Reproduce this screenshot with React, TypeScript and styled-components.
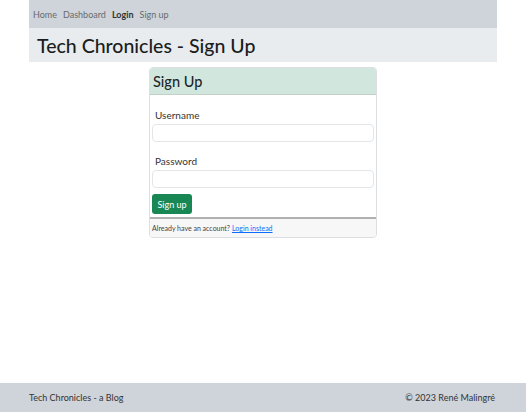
import styled, { createGlobalStyle } from "styled-components";

const GlobalStyle = createGlobalStyle`
  html, body {
    margin: 0;
    padding: 0;
    height: 100%;
  }
  body {
    font-family: Lato, "Noto Sans", sans-serif;
    color: #212529;
    background: #fff;
  }
  #root {
    height: 100%;
  }
`;

const Page = styled.div`
  min-height: 100vh;
  display: flex;
  flex-direction: column;
`;

const Container = styled.div`
  margin: 0 29px;
`;

const NavBar = styled.nav`
  background-color: #ced4da;
  height: 28px;
  display: flex;
  align-items: center;
  gap: 6px;
  padding-left: 4px;
`;

const NavLink = styled.a<{ $active?: boolean }>`
  font-size: 9px;
  color: ${(p) => (p.$active ? "#333" : "#666b70")};
  font-weight: ${(p) => (p.$active ? 700 : 400)};
  text-decoration: none;
`;

const Banner = styled.header`
  background-color: #e9ecef;
  height: 34px;
  display: flex;
  align-items: center;
  padding-left: 8px;
`;

const Title = styled.h1`
  margin: 0;
  font-size: 19.5px;
  font-weight: 500;
  color: #1a1d20;
`;

const Card = styled.div`
  width: 226px;
  margin: 5px auto 0;
  border: 1px solid #dcdfe2;
  border-radius: 4px;
  overflow: hidden;
`;

const CardHeader = styled.div`
  background-color: #d1e7dd;
  height: 26px;
  border-bottom: 1px solid #c3d0ca;
  display: flex;
  align-items: center;
  padding-left: 3px;
`;

const CardTitle = styled.h2`
  margin: 0;
  font-size: 14.5px;
  font-weight: 500;
`;

const CardBody = styled.form`
  padding: 9px 2px 0;
  display: flex;
  flex-direction: column;
`;

const Label = styled.label`
  font-size: 10px;
  color: #333;
  margin: 5px 0 3px 3px;
`;

const Input = styled.input`
  height: 18px;
  border: 1px solid #e3e6e9;
  border-radius: 4px;
  box-sizing: border-box;
  margin-bottom: 8px;
`;

const SubmitButton = styled.button`
  align-self: flex-start;
  background-color: #198754;
  color: #fff;
  border: none;
  border-radius: 3px;
  font-family: inherit;
  font-size: 9px;
  width: 40px;
  height: 20px;
  padding: 0;
  margin-top: -2px;
`;

const CardFooter = styled.div`
  margin-top: 3px;
  border-top: 2px solid #b0b0b0;
  background-color: #f7f7f7;
  height: 18px;
  display: flex;
  align-items: center;
  padding-left: 2px;
  font-size: 7px;
  color: #444;
`;

const FooterLink = styled.a`
  color: #0d6efd;
  margin-left: 2px;
`;

const PageFooter = styled.footer`
  margin-top: auto;
  background-color: #ced4da;
  height: 29px;
  display: flex;
  align-items: center;
  justify-content: space-between;
  padding: 0 31px 0 29px;
  font-size: 9px;
  color: #333;
`;

const App = () => {
  return (
    <>
      <GlobalStyle />
      <Page>
        <Container>
          <NavBar>
            <NavLink href="#">Home</NavLink>
            <NavLink href="#">Dashboard</NavLink>
            <NavLink href="#" $active>
              Login
            </NavLink>
            <NavLink href="#">Sign up</NavLink>
          </NavBar>
          <Banner>
            <Title>Tech Chronicles - Sign Up</Title>
          </Banner>
        </Container>
        <Card>
          <CardHeader>
            <CardTitle>Sign Up</CardTitle>
          </CardHeader>
          <CardBody onSubmit={(e) => e.preventDefault()}>
            <Label htmlFor="username">Username</Label>
            <Input id="username" type="text" />
            <Label htmlFor="password">Password</Label>
            <Input id="password" type="password" />
            <SubmitButton type="submit">Sign up</SubmitButton>
          </CardBody>
          <CardFooter>
            Already have an account?
            <FooterLink href="#">Login instead</FooterLink>
          </CardFooter>
        </Card>
        <PageFooter>
          <span>Tech Chronicles - a Blog</span>
          <span>© 2023 René Malingré</span>
        </PageFooter>
      </Page>
    </>
  );
};

export default App;
